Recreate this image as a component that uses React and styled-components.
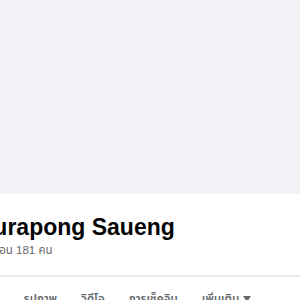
import React from "react";
import styled, { createGlobalStyle } from "styled-components";

const Global = createGlobalStyle`
  html, body { margin: 0; padding: 0; background: #f0f2f5; overflow: hidden; }
  body { font-family: "Liberation Sans", "Noto Sans", "Noto Sans Thai", sans-serif; }
`;

const Page = styled.div`
  width: 300px;
  height: 300px;
  display: flex;
  flex-direction: column;
  overflow: hidden;
`;

const Cover = styled.div`
  height: 194px;
  flex: none;
  background: #f0f2f5;
`;

const Header = styled.div`
  background: #ffffff;
  flex: 1;
  display: flex;
  flex-direction: column;
`;

const Info = styled.div`
  padding: 18px 0 0 0;
  height: 83px;
  box-sizing: border-box;
  border-bottom: 2px solid #e8e9ec;
  display: flex;
  flex-direction: column;
`;

const Name = styled.h1`
  margin: 0 0 0 -22px;
  font-size: 23px;
  line-height: 30px;
  font-weight: 700;
  color: #050505;
  white-space: nowrap;
`;

const Friends = styled.span`
  margin-left: -12px;
  font-size: 11.5px;
  line-height: 16px;
  color: #65676b;
  white-space: nowrap;
`;

const Tabs = styled.nav`
  display: flex;
  gap: 24px;
  padding-top: 14px;
  margin-left: -26px;
`;

const Tab = styled.span`
  font-size: 11.5px;
  line-height: 16px;
  font-weight: 600;
  color: #65676b;
  white-space: nowrap;
  display: flex;
  align-items: center;
  gap: 4px;
`;

const Caret = styled.svg`
  width: 8px;
  height: 6px;
  fill: #65676b;
`;

export default function App() {
  return (
    <Page>
      <Global />
      <Cover />
      <Header>
        <Info>
          <Name>Surapong Saueng</Name>
          <Friends>เพื่อน 181 คน</Friends>
        </Info>
        <Tabs>
          <Tab>เพื่อน</Tab>
          <Tab>รูปภาพ</Tab>
          <Tab>วิดีโอ</Tab>
          <Tab>การเช็คอิน</Tab>
          <Tab>
            เพิ่มเติม
            <Caret viewBox="0 0 8 6"><path d="M0 0h8L4 6z" /></Caret>
          </Tab>
        </Tabs>
      </Header>
    </Page>
  );
}
